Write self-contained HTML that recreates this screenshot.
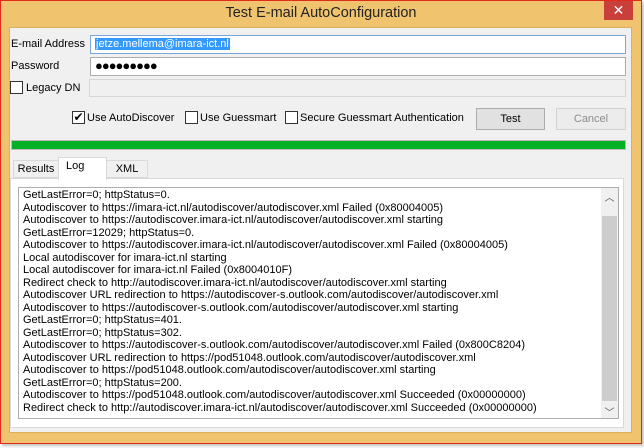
<!DOCTYPE html>
<html><head><style>
*{margin:0;padding:0;box-sizing:border-box}
body{width:644px;height:448px;background:#fff;position:relative;overflow:hidden;font-family:"Liberation Sans",sans-serif;font-size:11px;color:#000}
.a{position:absolute}
.win{left:0;top:0;width:642px;height:444px;background:#f0c46e;border:1px solid #e02a1a;box-shadow:2px 2px 3px rgba(0,0,0,.25)}
.client{left:9px;top:27px;width:623px;height:406px;background:#f0f0f0;border:1px solid #d8b060}
.inp{background:#fff;border:1px solid #adadad;height:19px}
.cb{width:13px;height:13px;border:1px solid #333;background:#fff}
.btn{border:1px solid #adadad;background:#e1e1e1;text-align:center;line-height:20px;height:22px}
.lg{left:23px;font-size:11px;line-height:12.5px;white-space:nowrap}
</style></head><body>
<div class="a win"></div>
<div class="a" style="left:0;top:5px;width:642px;text-align:center;font-size:14.5px;color:#222">Test E-mail AutoConfiguration</div>
<div class="a" style="left:604px;top:1px;width:29px;height:19px;background:#c9403a;color:#fff;text-align:center;font-size:14px;line-height:19px">✕</div>
<div class="a client"></div>
<div class="a" style="left:11px;top:38px">E-mail Address</div>
<div class="a inp" style="left:90px;top:35px;width:536px;border-color:#7aa7d8"><span style="background:#3399ff;color:#fff;margin-left:4px;padding:0 1px;line-height:17px">jetze.mellema@imara-ict.nl</span></div>
<div class="a" style="left:11px;top:60px">Password</div>
<div class="a inp" style="left:90px;top:57px;width:536px;font-size:13px;line-height:16px;padding-left:4px;letter-spacing:-1px">●●●●●●●●●</div>
<div class="a cb" style="left:10px;top:81px"></div>
<div class="a" style="left:26px;top:82px">Legacy DN</div>
<div class="a" style="left:89px;top:79px;width:537px;height:18px;border:1px solid #d6d6d6;background:#f0f0f0"></div>
<div class="a cb" style="left:72px;top:111px;font-size:12px;line-height:11px;text-align:center">✔</div>
<div class="a" style="left:87px;top:112px">Use AutoDiscover</div>
<div class="a cb" style="left:185px;top:111px"></div>
<div class="a" style="left:200px;top:112px">Use Guessmart</div>
<div class="a cb" style="left:285px;top:111px"></div>
<div class="a" style="left:300px;top:112px">Secure Guessmart Authentication</div>
<div class="a btn" style="left:476px;top:108px;width:69px">Test</div>
<div class="a btn" style="left:556px;top:108px;width:70px;color:#8d8d8d;background:#ececec;border-color:#d3d3d3">Cancel</div>
<div class="a" style="left:11px;top:140px;width:615px;height:10px;background:#06b025;border:1px solid #bcbcbc"></div>
<div class="a" style="left:10px;top:178px;width:614px;height:250px;border:1px solid #d9d9d9;background:#fff"></div>
<div class="a" style="left:13px;top:160px;width:46px;height:18px;border:1px solid #d9d9d9;background:#f0f0f0;text-align:center;line-height:17px">Results</div>
<div class="a" style="left:106px;top:160px;width:42px;height:18px;border:1px solid #d9d9d9;background:#f0f0f0;text-align:center;line-height:17px">XML</div>
<div class="a" style="left:58px;top:157px;width:49px;height:23px;border:1px solid #d9d9d9;border-bottom:none;background:#fff;padding-left:7px;line-height:17px">Log</div>
<div class="a" style="left:18px;top:187px;width:601px;height:232px;border:1px solid #adadad;background:#fff"></div>
<div class="a" style="left:601px;top:188px;width:17px;height:230px;background:#f0f0f0"></div>
<div class="a" style="left:602px;top:216px;width:15px;height:185px;background:#cdcdcd"></div>
<div class="a" style="left:601px;top:189px;width:17px;text-align:center;font-size:10px;color:#555">︿</div>
<div class="a" style="left:601px;top:404px;width:17px;text-align:center;font-size:10px;color:#555">﹀</div>
<div class="a lg" style="top:189px">GetLastError=0; httpStatus=0.<br>Autodiscover to https://imara-ict.nl/autodiscover/autodiscover.xml Failed (0x80004005)<br>Autodiscover to https://autodiscover.imara-ict.nl/autodiscover/autodiscover.xml starting<br>GetLastError=12029; httpStatus=0.<br>Autodiscover to https://autodiscover.imara-ict.nl/autodiscover/autodiscover.xml Failed (0x80004005)<br>Local autodiscover for imara-ict.nl starting<br>Local autodiscover for imara-ict.nl Failed (0x8004010F)<br>Redirect check to http://autodiscover.imara-ict.nl/autodiscover/autodiscover.xml starting<br>Autodiscover URL redirection to https://autodiscover-s.outlook.com/autodiscover/autodiscover.xml<br>Autodiscover to https://autodiscover-s.outlook.com/autodiscover/autodiscover.xml starting<br>GetLastError=0; httpStatus=401.<br>GetLastError=0; httpStatus=302.<br>Autodiscover to https://autodiscover-s.outlook.com/autodiscover/autodiscover.xml Failed (0x800C8204)<br>Autodiscover URL redirection to https://pod51048.outlook.com/autodiscover/autodiscover.xml<br>Autodiscover to https://pod51048.outlook.com/autodiscover/autodiscover.xml starting<br>GetLastError=0; httpStatus=200.<br>Autodiscover to https://pod51048.outlook.com/autodiscover/autodiscover.xml Succeeded (0x00000000)<br>Redirect check to http://autodiscover.imara-ict.nl/autodiscover/autodiscover.xml Succeeded (0x00000000)</div>
</body></html>
